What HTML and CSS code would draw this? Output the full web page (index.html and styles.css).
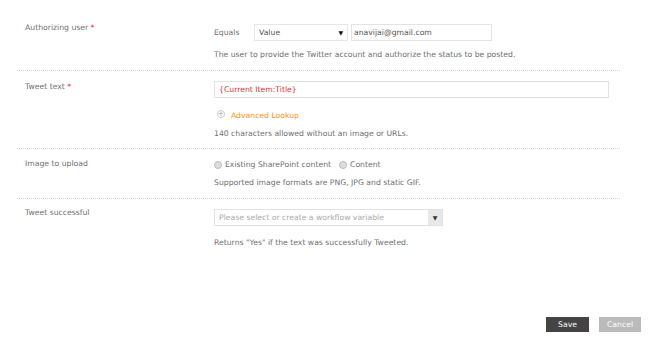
FILE: index.html
```html
<!DOCTYPE html>
<html lang="en">
<head>
    <meta charset="UTF-8">
    <title>Publish to Twitter</title>
    <link rel="stylesheet" href="styles.css">
</head>
<body>
    <div class="form">
        <div class="row first">
            <div class="label">Authorizing user <span class="req">*</span></div>
            <div class="field">
                <div class="line">
                    <span class="op">Equals</span>
                    <div class="select value">Value<span class="arrow">&#9660;</span></div>
                    <div class="input email">anavijai@gmail.com</div>
                </div>
                <div class="help">The user to provide the Twitter account and authorize the status to be posted.</div>
            </div>
        </div>
        <div class="row second">
            <div class="label">Tweet text <span class="req">*</span></div>
            <div class="field">
                <div class="input tweet">{Current Item:Title}</div>
                <div class="lookup"><span class="plus">+</span>Advanced Lookup</div>
                <div class="help near">140 characters allowed without an image or URLs.</div>
            </div>
        </div>
        <div class="row third">
            <div class="label">Image to upload</div>
            <div class="field">
                <div class="radios">
                    <label><span class="radio"></span>Existing SharePoint content</label>
                    <label><span class="radio"></span>Content</label>
                </div>
                <div class="help mid">Supported image formats are PNG, JPG and static GIF.</div>
            </div>
        </div>
        <div class="row last">
            <div class="label">Tweet successful</div>
            <div class="field">
                <div class="combo">
                    <span class="placeholder">Please select or create a workflow variable</span>
                    <span class="drop">&#9660;</span>
                </div>
                <div class="help far">Returns "Yes" if the text was successfully Tweeted.</div>
            </div>
        </div>
    </div>
    <div class="buttons">
        <button class="save">Save</button>
        <button class="cancel">Cancel</button>
    </div>
</body>
</html>
```

FILE: styles.css
```css
body {
    margin: 0;
    font-family: "DejaVu Sans", Verdana, sans-serif;
    font-size: 7.7px;
    color: #707070;
    background: #fff;
    width: 650px;
    height: 339px;
    position: relative;
}
.form {
    margin-left: 17px;
    width: 603px;
}
.row {
    display: flex;
    border-bottom: 1px dotted #d8d8d8;
    padding-left: 8px;
}
.row.first {
    padding-top: 24px;
    padding-bottom: 9px;
}
.row.second {
    padding-top: 10px;
    padding-bottom: 8px;
}
.row.third {
    padding-top: 10px;
    padding-bottom: 9px;
}
.row.last {
    padding-top: 10px;
    border-bottom: none;
}
.label {
    width: 189px;
    flex: none;
    line-height: 12px;
    margin-top: -2px;
}
.row.second .label {
    margin-top: 0;
}
.row.third .label {
    margin-top: -1px;
}
.req {
    color: #e3222e;
}
.field {
    flex: 1;
}
.line {
    display: flex;
    align-items: center;
    height: 17px;
}
.op {
    width: 40px;
}
.select, .input, .combo {
    box-sizing: border-box;
    height: 17px;
    border: 1px solid #e3e3e3;
    background: #fff;
    line-height: 15px;
    padding-left: 4px;
    color: #555;
}
.select.value {
    width: 94px;
    position: relative;
    margin-right: 3px;
    border-color: #e6e6e6;
}
.arrow {
    position: absolute;
    right: 4px;
    top: 0;
    font-size: 6px;
    color: #111;
}
.input.email {
    width: 141px;
    padding-left: 2px;
}
.help {
    margin-top: 8px;
    line-height: 12px;
}
.help.near {
    margin-top: 6px;
}
.help.mid {
    margin-top: 6px;
}
.help.far {
    margin-top: 11px;
}
.input.tweet {
    width: 395px;
    color: #e0303a;
}
.lookup {
    margin-top: 12px;
    color: #f7941d;
    display: flex;
    align-items: center;
    line-height: 12px;
    margin-left: 3px;
}
.plus {
    width: 8px;
    height: 8px;
    box-sizing: border-box;
    border: 1px solid #ccc;
    border-radius: 50%;
    color: #999;
    font-size: 7px;
    line-height: 6px;
    text-align: center;
    margin-right: 6px;
    margin-top: -4px;
}
.radios {
    display: flex;
    line-height: 12px;
}
.radios label {
    display: flex;
    align-items: center;
    margin-right: 8px;
}
.radio {
    width: 6px;
    height: 6px;
    border-radius: 50%;
    border: 1px solid #bbb;
    background: #ddd;
    margin-right: 3px;
}
.combo {
    width: 229px;
    display: flex;
    justify-content: space-between;
    padding-right: 0;
    color: #aaa;
}
.drop {
    width: 14px;
    background: #e8e8e8;
    color: #333;
    font-size: 6px;
    text-align: center;
}
.buttons {
    position: absolute;
    top: 317px;
    left: 546px;
    display: flex;
    gap: 10px;
}
button {
    font-family: inherit;
    font-size: 7.7px;
    height: 15px;
    border: none;
    color: #fff;
    padding: 0;
}
.save {
    width: 43px;
    background: #444;
}
.cancel {
    width: 42px;
    background: #bbb;
}
```
